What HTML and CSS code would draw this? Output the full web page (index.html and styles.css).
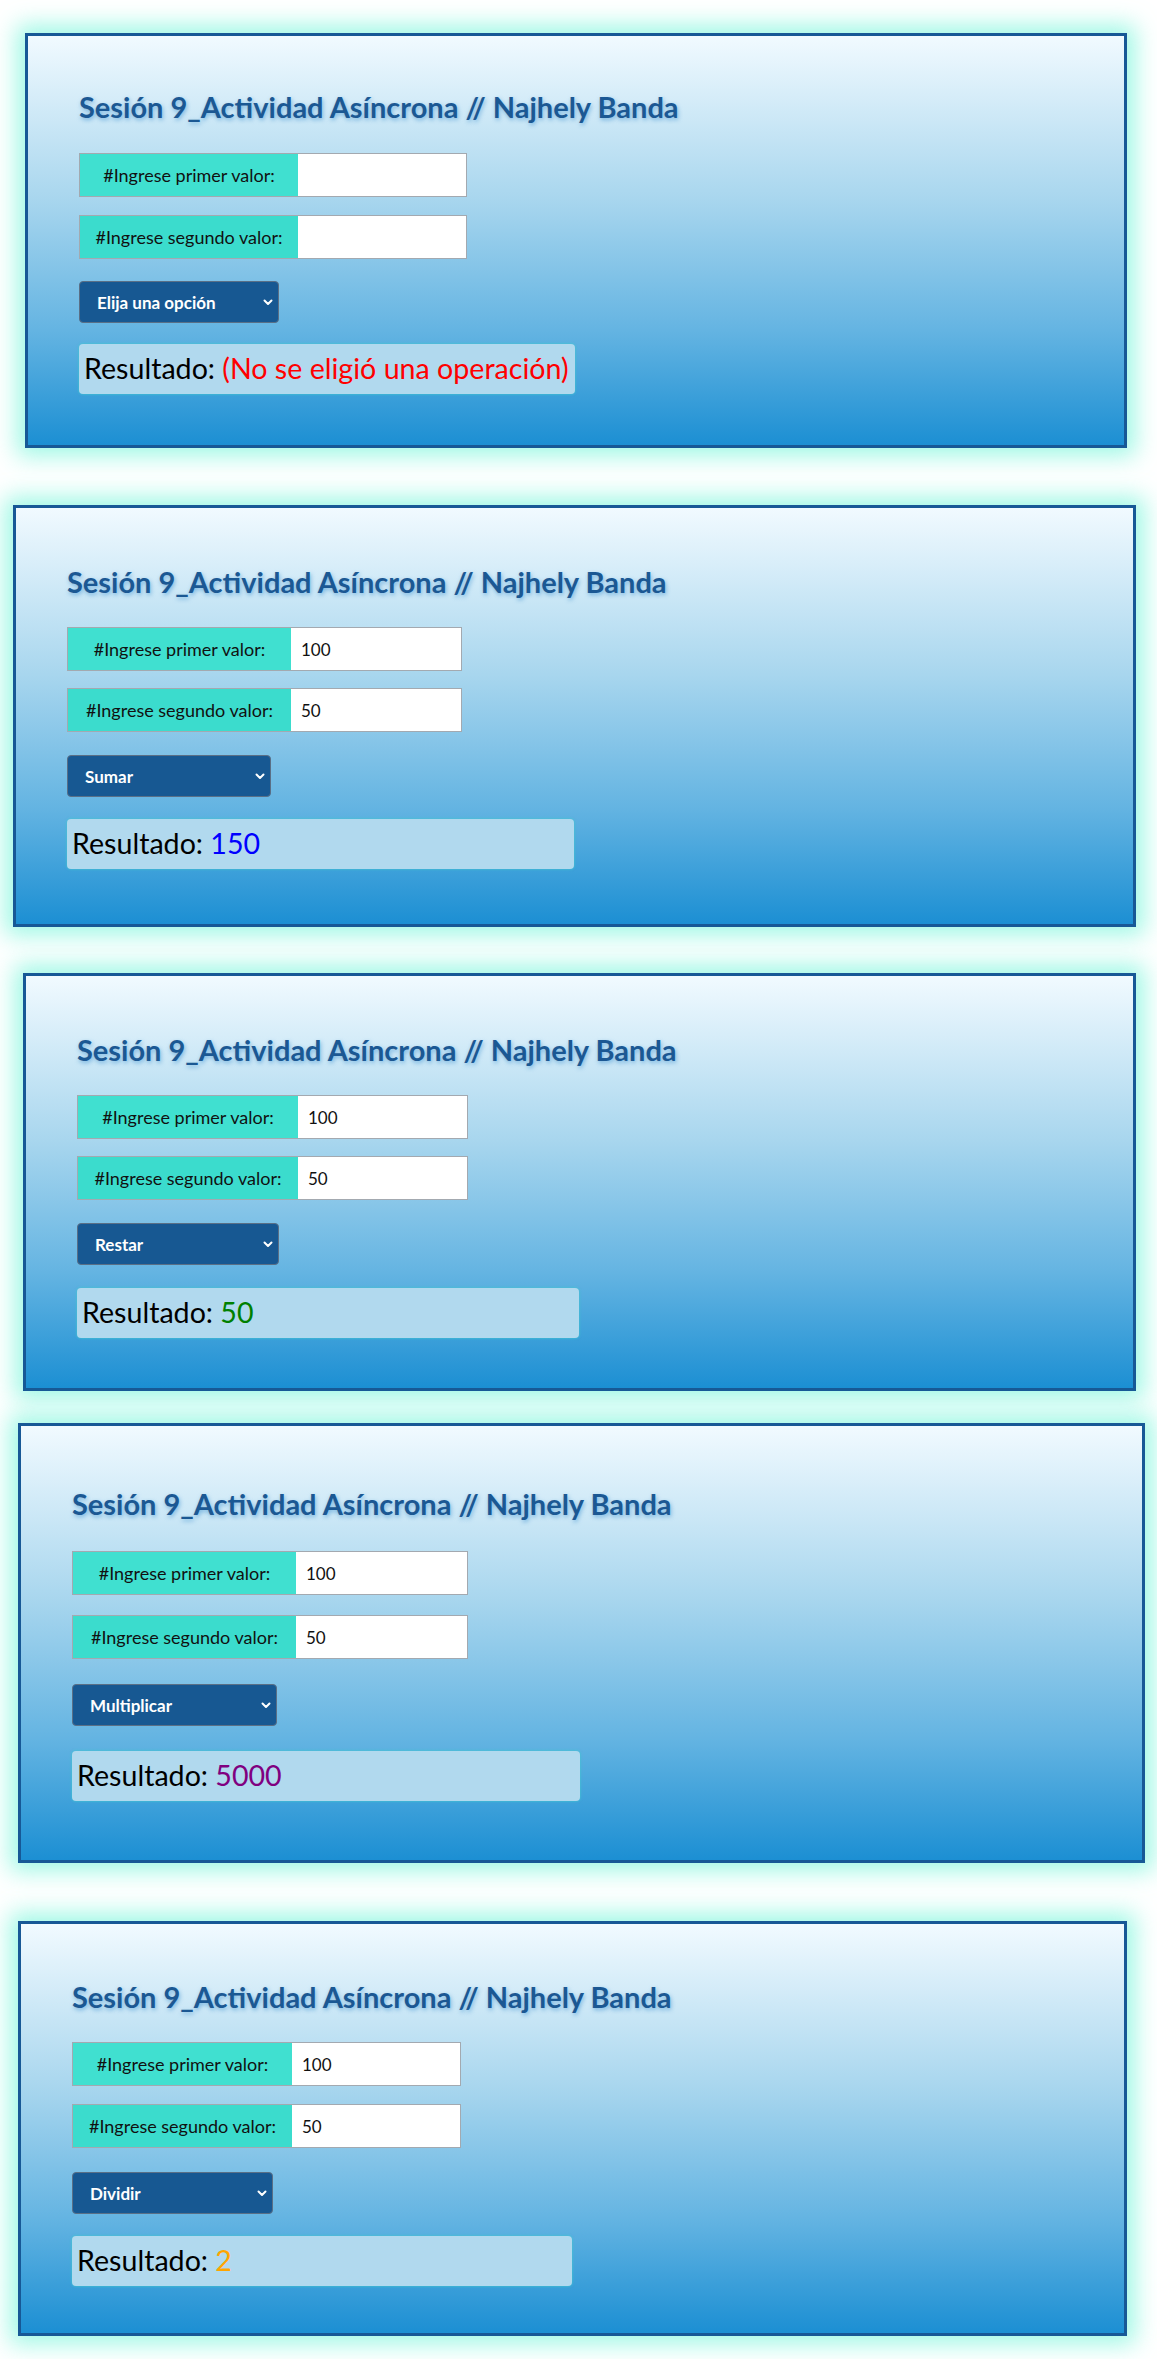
FILE: index.html
```html
<!DOCTYPE html>
<html lang="es">
<head>
<meta charset="utf-8">
<title>Sesión 9_Actividad Asíncrona</title>
<link rel="stylesheet" href="styles.css">
</head>
<body>
<main class="page">

  <section class="panel panel-1">
    <h1 class="title">Sesión 9_Actividad Asíncrona // Najhely Banda</h1>
    <div class="field">
      <label class="field-label">#Ingrese primer valor:</label>
      <input class="field-input" type="text" value="">
    </div>
    <div class="field field-2">
      <label class="field-label">#Ingrese segundo valor:</label>
      <input class="field-input" type="text" value="">
    </div>
    <div class="select"><span>Elija una opción</span><svg class="chev" width="10" height="7" viewBox="0 0 10 7"><path d="M1.5 1.5 L5 5 L8.5 1.5" fill="none" stroke="#fff" stroke-width="2" stroke-linecap="round" stroke-linejoin="round"/></svg></div>
    <div class="result">Resultado: <span class="r-red">(No se eligió una operación)</span></div>
  </section>

  <section class="panel panel-2">
    <h1 class="title">Sesión 9_Actividad Asíncrona // Najhely Banda</h1>
    <div class="field">
      <label class="field-label">#Ingrese primer valor:</label>
      <input class="field-input" type="text" value="100">
    </div>
    <div class="field field-2">
      <label class="field-label">#Ingrese segundo valor:</label>
      <input class="field-input" type="text" value="50">
    </div>
    <div class="select"><span>Sumar</span><svg class="chev" width="10" height="7" viewBox="0 0 10 7"><path d="M1.5 1.5 L5 5 L8.5 1.5" fill="none" stroke="#fff" stroke-width="2" stroke-linecap="round" stroke-linejoin="round"/></svg></div>
    <div class="result">Resultado: <span class="r-blue">150</span></div>
  </section>

  <section class="panel panel-3">
    <h1 class="title">Sesión 9_Actividad Asíncrona // Najhely Banda</h1>
    <div class="field">
      <label class="field-label">#Ingrese primer valor:</label>
      <input class="field-input" type="text" value="100">
    </div>
    <div class="field field-2">
      <label class="field-label">#Ingrese segundo valor:</label>
      <input class="field-input" type="text" value="50">
    </div>
    <div class="select"><span>Restar</span><svg class="chev" width="10" height="7" viewBox="0 0 10 7"><path d="M1.5 1.5 L5 5 L8.5 1.5" fill="none" stroke="#fff" stroke-width="2" stroke-linecap="round" stroke-linejoin="round"/></svg></div>
    <div class="result">Resultado: <span class="r-green">50</span></div>
  </section>

  <section class="panel panel-4">
    <h1 class="title">Sesión 9_Actividad Asíncrona // Najhely Banda</h1>
    <div class="field">
      <label class="field-label">#Ingrese primer valor:</label>
      <input class="field-input" type="text" value="100">
    </div>
    <div class="field field-2">
      <label class="field-label">#Ingrese segundo valor:</label>
      <input class="field-input" type="text" value="50">
    </div>
    <div class="select"><span>Multiplicar</span><svg class="chev" width="10" height="7" viewBox="0 0 10 7"><path d="M1.5 1.5 L5 5 L8.5 1.5" fill="none" stroke="#fff" stroke-width="2" stroke-linecap="round" stroke-linejoin="round"/></svg></div>
    <div class="result">Resultado: <span class="r-purple">5000</span></div>
  </section>

  <section class="panel panel-5">
    <h1 class="title">Sesión 9_Actividad Asíncrona // Najhely Banda</h1>
    <div class="field">
      <label class="field-label">#Ingrese primer valor:</label>
      <input class="field-input" type="text" value="100">
    </div>
    <div class="field field-2">
      <label class="field-label">#Ingrese segundo valor:</label>
      <input class="field-input" type="text" value="50">
    </div>
    <div class="select"><span>Dividir</span><svg class="chev" width="10" height="7" viewBox="0 0 10 7"><path d="M1.5 1.5 L5 5 L8.5 1.5" fill="none" stroke="#fff" stroke-width="2" stroke-linecap="round" stroke-linejoin="round"/></svg></div>
    <div class="result">Resultado: <span class="r-orange">2</span></div>
  </section>

</main>
</body>
</html>
```

FILE: styles.css
```css
* { box-sizing: border-box; }

html, body {
  margin: 0;
  padding: 0;
  background: #ffffff;
}

body {
  font-family: Lato, "Open Sans", "Liberation Sans", sans-serif;
  color: #000;
}

.page {
  display: flex;
  flex-direction: column;
  align-items: flex-start;
  padding-bottom: 23px;
}

.panel {
  --pt: 53px;
  --g1: 28px;
  --g2: 18px;
  --g3: 22px;
  --g4: 21px;
  --fw: 388px;
  --lw: 218px;
  --sw: 200px;
  --rw: 496px;
  display: flex;
  flex-direction: column;
  align-items: flex-start;
  border: 3px solid #175896;
  background: linear-gradient(to bottom, #f1faff 0%, #a8d6ee 40%, #64b4e2 72%, #1c8fd3 100%);
  box-shadow: 0 0 22px 8px rgba(127, 245, 220, 0.75);
  padding: var(--pt) 0 0 51px;
}

.panel-1 { margin: 33px 0 0 25px; width: 1102px; height: 415px; }
.panel-2 {
  margin: 57px 0 0 13px; width: 1123px; height: 422px;
  --pt: 56px; --g1: 27px; --g2: 17px; --g3: 23px; --g4: 22px;
  --fw: 395px; --lw: 223px; --sw: 204px; --rw: 507px;
}
.panel-3 {
  margin: 46px 0 0 23px; width: 1113px; height: 418px;
  --pt: 56px; --g1: 27px; --g2: 17px; --g3: 23px; --g4: 23px;
  --fw: 391px; --lw: 220px; --sw: 202px; --rw: 502px;
}
.panel-4 {
  margin: 32px 0 0 18px; width: 1127px; height: 440px;
  --pt: 60px; --g1: 29px; --g2: 20px; --g3: 25px; --g4: 25px;
  --fw: 396px; --lw: 223px; --sw: 205px; --rw: 508px;
}
.panel-5 {
  margin: 58px 0 0 18px; width: 1109px; height: 415px;
  --pt: 55px; --g1: 27px; --g2: 18px; --g3: 24px; --g4: 22px;
  --fw: 389px; --lw: 219px; --sw: 201px; --rw: 500px;
}

.title {
  margin: 0;
  font-family: Lato, "Open Sans", sans-serif;
  font-weight: 700;
  font-size: 29px;
  line-height: 36px;
  color: #1b5893;
  text-shadow: 1px 2px 4px rgba(70, 150, 210, 0.65);
  white-space: nowrap;
}

.field {
  display: flex;
  margin-top: var(--g1);
  width: var(--fw);
  height: 44px;
  border: 1px solid #a3a9b0;
}

.field-2 { margin-top: var(--g2); }

.field-label {
  flex: 0 0 var(--lw);
  display: flex;
  align-items: center;
  justify-content: center;
  background: #40e0d0;
  font-family: Lato, "Open Sans", sans-serif;
  font-size: 18px;
  color: #111;
  white-space: nowrap;
}

.field-2 .field-label { background: #3bdccd; }

.field-input {
  flex: 1 1 auto;
  min-width: 0;
  margin: 0;
  border: 0;
  background: #ffffff;
  padding: 0 10px;
  font-family: Lato, "Open Sans", sans-serif;
  font-size: 17px;
  color: #111;
  outline: none;
}

.select {
  display: flex;
  align-items: center;
  justify-content: space-between;
  margin-top: var(--g3);
  width: var(--sw);
  height: 42px;
  padding: 0 5px 0 17px;
  background: #175892;
  border: 1px solid #5a6f86;
  border-radius: 4px;
  color: #ffffff;
  font-family: Lato, "Open Sans", sans-serif;
  font-weight: 700;
  font-size: 17px;
}

.chev { display: block; }

.result {
  margin-top: var(--g4);
  width: var(--rw);
  height: 50px;
  padding: 7px 5px 0;
  background: #b1d9ee;
  border-radius: 4px;
  box-shadow: 0 0 2px 1px rgba(64, 200, 210, 0.55);
  font-family: Lato, "Open Sans", sans-serif;
  font-size: 28.6px;
  line-height: 35px;
  color: #000;
  white-space: nowrap;
}

.r-red { color: #ff0000; }
.r-blue { color: #0000ff; }
.r-green { color: #008000; }
.r-purple { color: #800080; }
.r-orange { color: #ffa500; }
```
